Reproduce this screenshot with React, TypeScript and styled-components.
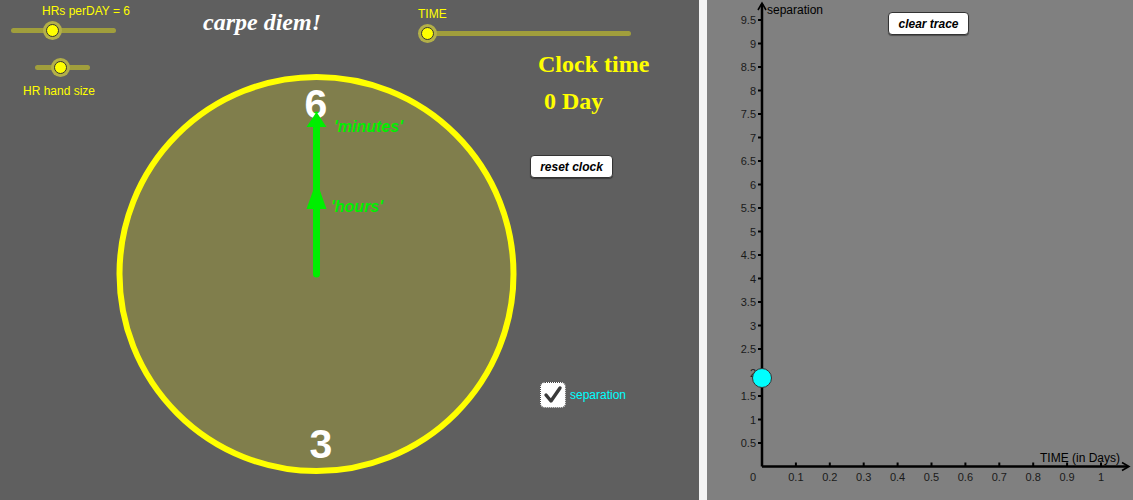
import { FC } from 'react';
import styled, { createGlobalStyle } from 'styled-components';

const GlobalStyle = createGlobalStyle`
  html, body {
    margin: 0;
    padding: 0;
    overflow: hidden;
    background: #f4f4f4;
  }
`;

const Page = styled.div`
  display: grid;
  grid-template-columns: 699px 426px;
  column-gap: 8px;
  width: 1133px;
  height: 500px;
  background: #f4f4f4;
`;

/* Both panels stack their drawing and their controls in one grid cell */
const ClockPanel = styled.div`
  display: grid;
  grid-template-columns: 203px 215px 1fr;
  grid-template-rows: 500px;
  background: #5f5f5f;
  overflow: hidden;
  font-family: 'Liberation Sans', Arial, sans-serif;
`;

const GraphPanel = styled.div`
  display: grid;
  grid-template-columns: 1fr;
  grid-template-rows: 497px;
  background: #808080;
  overflow: hidden;
  font-family: 'Liberation Sans', Arial, sans-serif;
`;

const Drawing = styled.svg`
  grid-row: 1;
  grid-column: 1 / -1;
  display: block;
`;

const Column = styled.div<{ $col: number }>`
  grid-row: 1;
  grid-column: ${(p) => p.$col};
  display: flex;
  flex-direction: column;
  align-items: flex-start;
  z-index: 1;
`;

const LeftControls = styled(Column)`
  padding: 4px 0 0 11px;
`;

const MottoColumn = styled(Column)`
  padding-top: 9px;
`;

const RightControls = styled(Column)`
  padding-top: 7px;
`;

const GraphControls = styled(Column)`
  padding: 12px 0 0 181px;
`;

const SliderLabel = styled.span<{ $indent: number }>`
  margin-left: ${(p) => p.$indent}px;
  font-size: 12px;
  line-height: 14px;
  color: #ffff00;
  white-space: nowrap;
`;

const Track = styled.div<{ $w: number; $indent: number; $gap: number }>`
  position: relative;
  width: ${(p) => p.$w}px;
  height: 5px;
  margin: ${(p) => p.$gap}px 0 0 ${(p) => p.$indent}px;
  border-radius: 3px;
  background: #a09e3c;
`;

const Knob = styled.span<{ $at: number }>`
  position: absolute;
  left: ${(p) => p.$at}px;
  top: 50%;
  width: 11px;
  height: 11px;
  margin: -7px 0 0 -7px;
  border-radius: 50%;
  background: #ffff00;
  border: 1px solid #333;
  box-shadow: 0 0 0 3px #b3b048;
`;

const Motto = styled.span`
  font-family: 'Liberation Serif', 'Times New Roman', serif;
  font-style: italic;
  font-weight: bold;
  font-size: 24px;
  color: #ffffff;
  white-space: nowrap;
`;

const BigYellow = styled.span<{ $indent: number; $gap: number }>`
  margin: ${(p) => p.$gap}px 0 0 ${(p) => p.$indent}px;
  font-family: 'Liberation Serif', 'Times New Roman', serif;
  font-weight: bold;
  font-size: 24px;
  line-height: 28px;
  color: #ffff00;
  white-space: nowrap;
`;

const AppletButton = styled.button<{ $w: number; $indent?: number; $gap?: number }>`
  width: ${(p) => p.$w}px;
  height: 23px;
  margin: ${(p) => p.$gap ?? 0}px 0 0 ${(p) => p.$indent ?? 0}px;
  padding: 0;
  background: #ffffff;
  border: 1px solid #333;
  border-radius: 4px;
  font-family: 'Liberation Sans', Arial, sans-serif;
  font-style: italic;
  font-weight: bold;
  font-size: 12px;
  color: #000;
  box-shadow: 0 1px 1px rgba(0, 0, 0, 0.4);
`;

const CheckRow = styled.label`
  display: flex;
  align-items: center;
  gap: 4px;
  margin: 204px 0 0 122px;
  font-size: 12px;
  color: #00ffff;
`;

const CheckBox = styled.span`
  display: flex;
  align-items: center;
  justify-content: center;
  width: 24px;
  height: 24px;
  background: #ffffff;
  border: 1px dotted #444;
  border-radius: 5px;
`;

const Slider: FC<{ w: number; at: number; indent: number; gap: number }> = ({ w, at, indent, gap }) => (
  <Track $w={w} $indent={indent} $gap={gap}>
    <Knob $at={at} />
  </Track>
);

const sans = "'Liberation Sans', Arial, sans-serif";

const Clock: FC = () => (
  <Drawing width="699" height="500">
    <circle cx="316.5" cy="274" r="197" fill="#807e4c" stroke="#ffff00" strokeWidth="6" />
    <line x1="316.5" y1="274" x2="316.5" y2="115" stroke="#00ee00" strokeWidth="7" strokeLinecap="round" />
    <polygon points="316.5,181 306.5,209 326.5,209" fill="#00ee00" />
    <text x="316" y="118" textAnchor="middle" fontFamily={sans} fontWeight="bold" fontSize="41" fill="#ffffff">6</text>
    <polygon points="316.5,112 306.5,127 326.5,127" fill="#00ee00" />
    <text x="321" y="458" textAnchor="middle" fontFamily={sans} fontWeight="bold" fontSize="41" fill="#ffffff">3</text>
    <text x="334" y="132" fontFamily={sans} fontWeight="bold" fontStyle="italic" fontSize="16" fill="#00ee00">'minutes'</text>
    <text x="331" y="212" fontFamily={sans} fontWeight="bold" fontStyle="italic" fontSize="16" fill="#00ee00">'hours'</text>
  </Drawing>
);

const yTicks = Array.from({ length: 19 }, (_, i) => (i + 1) * 0.5);
const xTicks = Array.from({ length: 10 }, (_, i) => (i + 1) / 10);
const OX = 55;
const OY = 466.5;
const fy = (v: number) => OY - v * 47;
const fx = (t: number) => OX + t * 339;

const Graph: FC = () => (
  <Drawing width="426" height="497" fontFamily={sans}>
    <line x1={OX} y1={OY} x2={OX} y2="4" stroke="#000" strokeWidth="2.5" />
    <polyline points={`${OX - 4},10 ${OX},3 ${OX + 4},10`} fill="none" stroke="#000" strokeWidth="1.6" />
    <line x1={OX} y1={OY} x2="421" y2={OY} stroke="#000" strokeWidth="2.5" />
    <polyline points={`415,${OY - 4} 422,${OY} 415,${OY + 4}`} fill="none" stroke="#000" strokeWidth="1.6" />
    {yTicks.map((v) => (
      <g key={v}>
        <line x1={OX - 4} y1={fy(v)} x2={OX} y2={fy(v)} stroke="#000" strokeWidth="2" />
        <text x={OX - 6} y={fy(v) + 4} textAnchor="end" fontSize="11" fill="#1a1a1a">{v}</text>
      </g>
    ))}
    {xTicks.map((t) => (
      <g key={t}>
        <line x1={fx(t)} y1={OY} x2={fx(t)} y2={OY - 4} stroke="#000" strokeWidth="2" />
        <text x={fx(t)} y="481" textAnchor="middle" fontSize="11" fill="#1a1a1a">{t === 1 ? '1' : t.toFixed(1)}</text>
      </g>
    ))}
    <text x="46" y="481" textAnchor="middle" fontSize="11" fill="#1a1a1a">0</text>
    <text x="60" y="14" fontSize="12" fill="#000">separation</text>
    <text x="413" y="462" textAnchor="end" fontSize="12" fill="#000">TIME (in Days)</text>
    <circle cx={OX} cy="378" r="9.5" fill="#00ffff" stroke="#333" strokeWidth="1" />
  </Drawing>
);

const App: FC = () => (
  <>
    <GlobalStyle />
    <Page>
      <ClockPanel>
        <Clock />
        <LeftControls $col={1}>
          <SliderLabel $indent={31}>HRs perDAY = 6</SliderLabel>
          <Slider w={105} at={42} indent={0} gap={10} />
          <Slider w={55} at={26} indent={24} gap={32} />
          <SliderLabel $indent={12}>&nbsp;</SliderLabel>
          <SliderLabel $indent={12}>HR hand size</SliderLabel>
        </LeftControls>
        <MottoColumn $col={2}>
          <Motto>carpe diem!</Motto>
        </MottoColumn>
        <RightControls $col={3}>
          <SliderLabel $indent={0}>TIME</SliderLabel>
          <Slider w={211} at={8} indent={2} gap={10} />
          <BigYellow $indent={120} $gap={14}>Clock time</BigYellow>
          <BigYellow $indent={126} $gap={9}>0 Day</BigYellow>
          <AppletButton $w={83} $indent={112} $gap={40}>reset clock</AppletButton>
          <CheckRow>
            <CheckBox>
              <svg width="20" height="20" viewBox="0 0 20 20">
                <polyline points="3,10 8,16 17,3" fill="none" stroke="#3a3a3a" strokeWidth="3.4" strokeLinecap="round" strokeLinejoin="round" />
              </svg>
            </CheckBox>
            separation
          </CheckRow>
        </RightControls>
      </ClockPanel>
      <GraphPanel>
        <Graph />
        <GraphControls $col={1}>
          <AppletButton $w={81}>clear trace</AppletButton>
        </GraphControls>
      </GraphPanel>
    </Page>
  </>
);

export default App;
